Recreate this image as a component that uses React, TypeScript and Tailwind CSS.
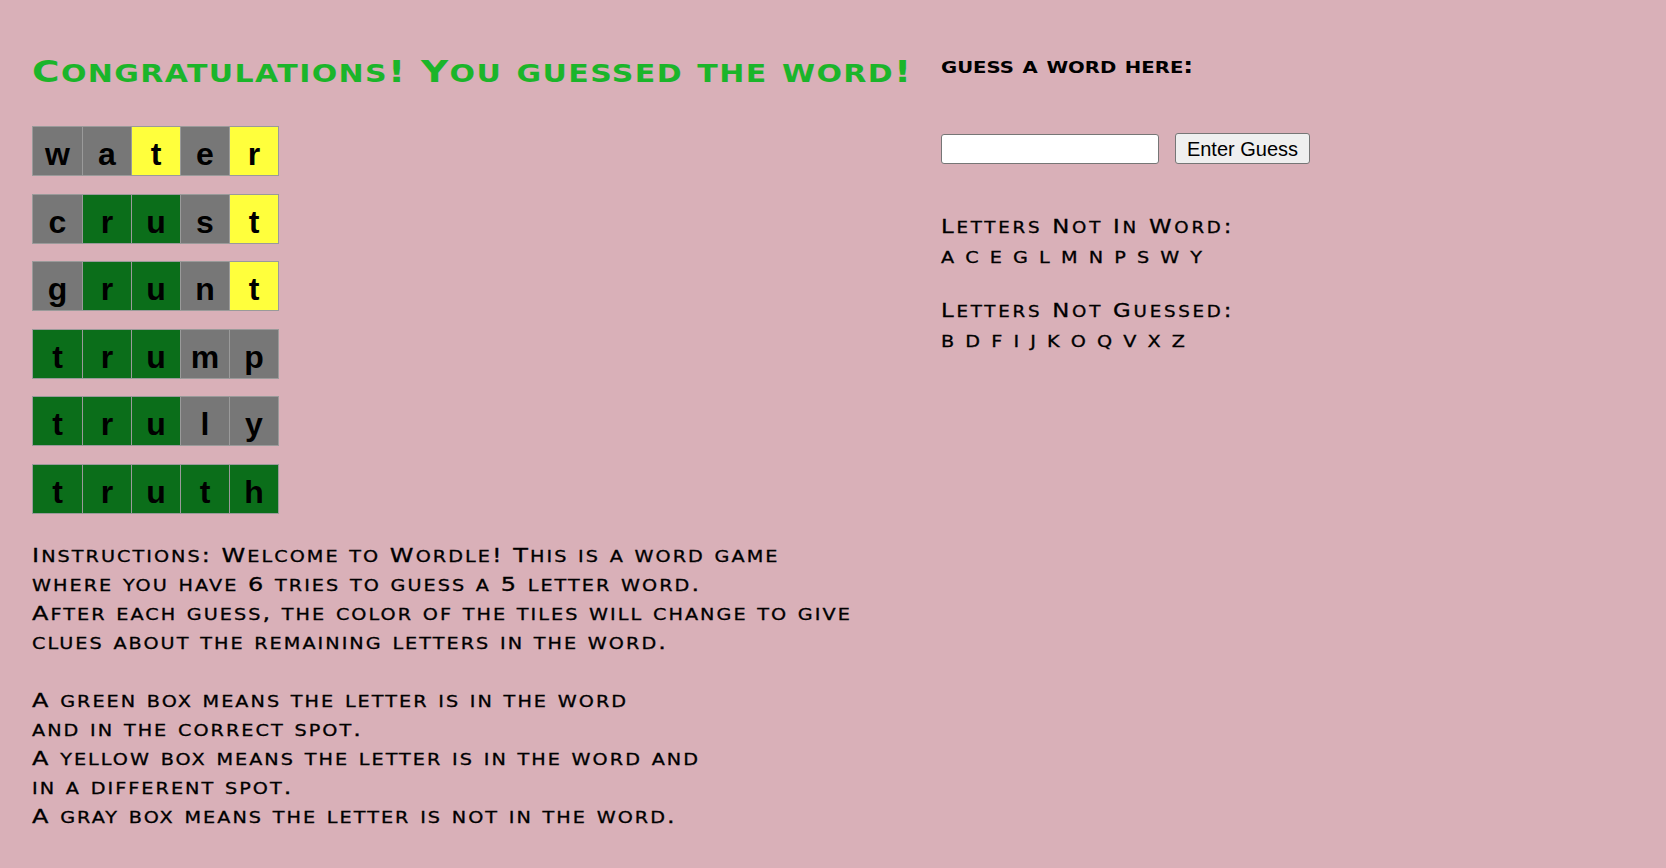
import React, { useState } from 'react';

type Tile = { letter: string; state: 'green' | 'yellow' | 'gray' };

const guesses: Tile[][] = [
  [
    { letter: 'w', state: 'gray' },
    { letter: 'a', state: 'gray' },
    { letter: 't', state: 'yellow' },
    { letter: 'e', state: 'gray' },
    { letter: 'r', state: 'yellow' },
  ],
  [
    { letter: 'c', state: 'gray' },
    { letter: 'r', state: 'green' },
    { letter: 'u', state: 'green' },
    { letter: 's', state: 'gray' },
    { letter: 't', state: 'yellow' },
  ],
  [
    { letter: 'g', state: 'gray' },
    { letter: 'r', state: 'green' },
    { letter: 'u', state: 'green' },
    { letter: 'n', state: 'gray' },
    { letter: 't', state: 'yellow' },
  ],
  [
    { letter: 't', state: 'green' },
    { letter: 'r', state: 'green' },
    { letter: 'u', state: 'green' },
    { letter: 'm', state: 'gray' },
    { letter: 'p', state: 'gray' },
  ],
  [
    { letter: 't', state: 'green' },
    { letter: 'r', state: 'green' },
    { letter: 'u', state: 'green' },
    { letter: 'l', state: 'gray' },
    { letter: 'y', state: 'gray' },
  ],
  [
    { letter: 't', state: 'green' },
    { letter: 'r', state: 'green' },
    { letter: 'u', state: 'green' },
    { letter: 't', state: 'green' },
    { letter: 'h', state: 'green' },
  ],
];

const instructions = [
  'Instructions: Welcome to Wordle! This is a word game',
  'where you have 6 tries to guess a 5 letter word.',
  'After each guess, the color of the tiles will change to give',
  'clues about the remaining letters in the word.',
  '',
  'A green box means the letter is in the word',
  'and in the correct spot.',
  'A yellow box means the letter is in the word and',
  'in a different spot.',
  'A gray box means the letter is not in the word.',
];

const tileColors = {
  green: 'bg-[#0b6e1a]',
  yellow: 'bg-[#ffff3c]',
  gray: 'bg-[#777777]',
};

// copperplate-style small caps: lowercase runs drawn as smaller capitals
function SmallCaps({ text }: { text: string }) {
  const parts = text.split(/([a-z]+)/);
  return (
    <>
      {parts.map((p, i) =>
        /^[a-z]+$/.test(p) ? (
          <span key={i} className="uppercase text-[0.8em] leading-none">
            {p}
          </span>
        ) : (
          <React.Fragment key={i}>{p}</React.Fragment>
        )
      )}
    </>
  );
}

function GuessRow({ tiles }: { tiles: Tile[] }) {
  return (
    <div className="flex w-fit border border-[#9a9a9a]">
      {tiles.map((t, i) => (
        <div
          key={i}
          className={`w-[49px] h-[48px] pt-[6px] leading-[42px] text-center text-[32px] font-bold text-black [font-family:'Liberation_Sans',Arial,sans-serif] ${tileColors[t.state]} ${i > 0 ? 'border-l border-[#9a9a9a]' : ''}`}
        >
          {t.letter}
        </div>
      ))}
    </div>
  );
}

export default function App() {
  const [guess, setGuess] = useState('');

  return (
    <div className="min-h-screen w-full bg-[#d9b0b8] text-black [font-family:'DejaVu_Sans',sans-serif]">
      <div className="flex pl-[32px] pt-[52px]">
        <div className="w-[909px] shrink-0">
          <h1 className="origin-left scale-x-[1.25] text-[30px] leading-[40px] font-bold text-[#1bb52a] tracking-[1.1px] whitespace-nowrap">
            <SmallCaps text="Congratulations! You guessed the word!" />
          </h1>

          <div className="mt-[34px] flex flex-col gap-[17.6px]">
            {guesses.map((row, i) => (
              <GuessRow key={i} tiles={row} />
            ))}
          </div>

          <div className="mt-[27px] origin-left scale-x-[1.2] text-[20px] leading-[29px] tracking-[1.7px] whitespace-nowrap [-webkit-text-stroke:0.3px_black]">
            {instructions.map((line, i) => (
              <p key={i} className="h-[29px]">
                <SmallCaps text={line} />
              </p>
            ))}
          </div>
        </div>

        <div className="flex flex-col">
          <h3 className="mt-[2px] origin-left scale-x-[1.2] text-[20.5px] leading-[24px] font-bold whitespace-nowrap">
            <SmallCaps text="guess a word here:" />
          </h3>

          <div className="mt-[55px] flex items-center gap-[16px]">
            <input
              type="text"
              value={guess}
              onChange={(e) => setGuess(e.target.value)}
              className="w-[218px] h-[30px] bg-white border border-[#767676] rounded-[3px] px-2 text-[16px] [font-family:'Liberation_Sans',Arial,sans-serif]"
            />
            <button
              type="button"
              className="w-[135px] h-[31px] bg-[#efefef] border border-[#767676] rounded-[3px] text-[20px] leading-none text-black [font-family:'Liberation_Sans',Arial,sans-serif]"
            >
              Enter Guess
            </button>
          </div>

          <div className="mt-[47px] origin-left scale-x-[1.2] [-webkit-text-stroke:0.3px_black]">
            <h3 className="text-[19px] leading-[30px] tracking-[2.3px] whitespace-nowrap">
              <SmallCaps text="Letters Not In Word:" />
            </h3>
            <p className="text-[16px] leading-[33px] tracking-[2.1px] whitespace-nowrap">A C E G L M N P S W Y</p>
          </div>

          <div className="mt-[21px] origin-left scale-x-[1.2] [-webkit-text-stroke:0.3px_black]">
            <h3 className="text-[19px] leading-[30px] tracking-[2.3px] whitespace-nowrap">
              <SmallCaps text="Letters Not Guessed:" />
            </h3>
            <p className="text-[16px] leading-[33px] tracking-[2.1px] whitespace-nowrap">B D F I J K O Q V X Z</p>
          </div>
        </div>
      </div>
    </div>
  );
}
